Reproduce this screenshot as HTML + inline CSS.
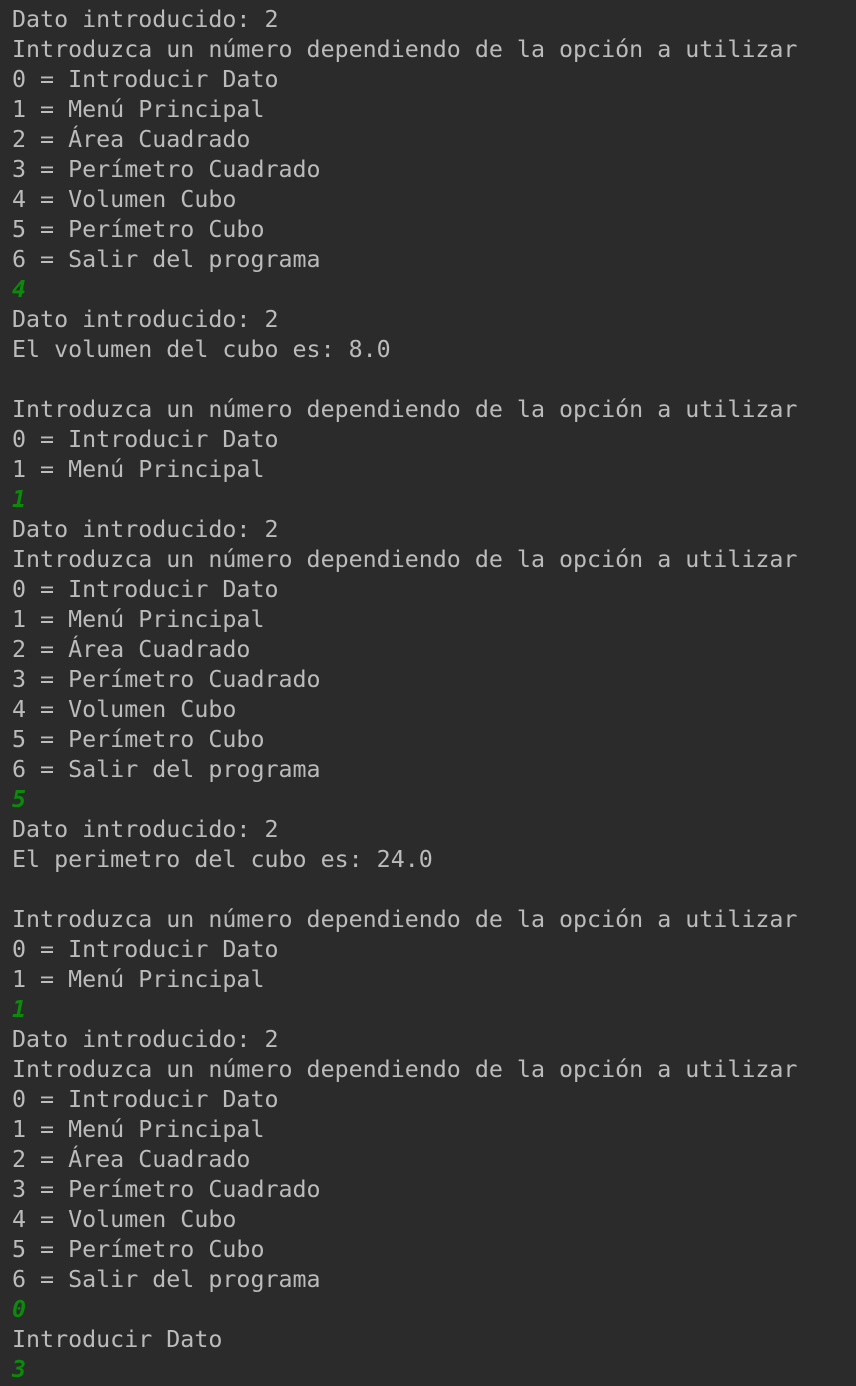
<!DOCTYPE html>
<html><head><meta charset="utf-8"><style>
html,body{margin:0;padding:0;background:#2b2b2b;width:856px;height:1386px;overflow:hidden}
pre{margin:0;padding:5px 0 0 12px;font-family:"DejaVu Sans Mono","Liberation Mono",monospace;font-size:23.3px;line-height:30px;color:#bbbbbb;white-space:pre}
i{color:#0b8a0b;font-style:italic;font-weight:bold}
</style></head><body><pre>Dato introducido: 2
Introduzca un número dependiendo de la opción a utilizar
0 = Introducir Dato
1 = Menú Principal
2 = Área Cuadrado
3 = Perímetro Cuadrado
4 = Volumen Cubo
5 = Perímetro Cubo
6 = Salir del programa
<i>4</i>
Dato introducido: 2
El volumen del cubo es: 8.0

Introduzca un número dependiendo de la opción a utilizar
0 = Introducir Dato
1 = Menú Principal
<i>1</i>
Dato introducido: 2
Introduzca un número dependiendo de la opción a utilizar
0 = Introducir Dato
1 = Menú Principal
2 = Área Cuadrado
3 = Perímetro Cuadrado
4 = Volumen Cubo
5 = Perímetro Cubo
6 = Salir del programa
<i>5</i>
Dato introducido: 2
El perimetro del cubo es: 24.0

Introduzca un número dependiendo de la opción a utilizar
0 = Introducir Dato
1 = Menú Principal
<i>1</i>
Dato introducido: 2
Introduzca un número dependiendo de la opción a utilizar
0 = Introducir Dato
1 = Menú Principal
2 = Área Cuadrado
3 = Perímetro Cuadrado
4 = Volumen Cubo
5 = Perímetro Cubo
6 = Salir del programa
<i>0</i>
Introducir Dato
<i>3</i></pre></body></html>
